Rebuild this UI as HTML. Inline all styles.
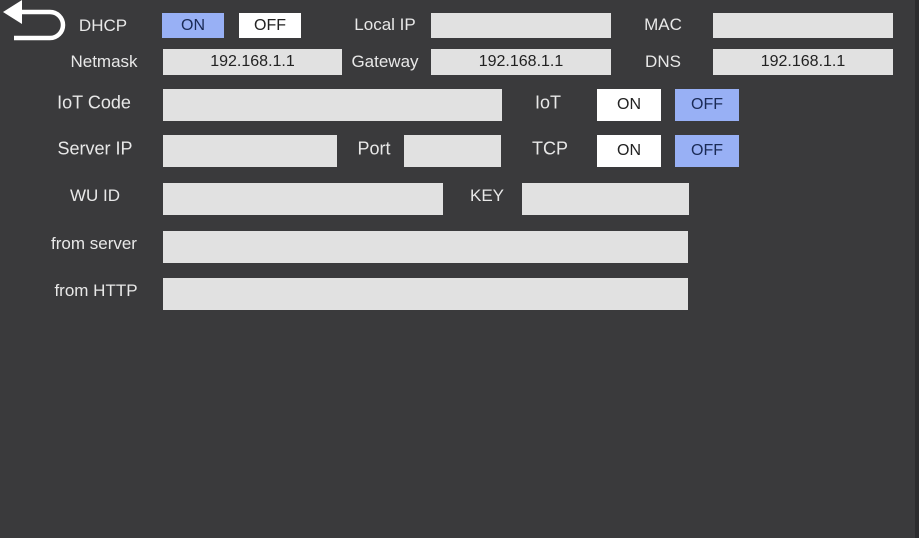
<!DOCTYPE html>
<html><head><style>
html,body{margin:0;padding:0;background:#3a3a3c;}
body{width:919px;height:538px;position:relative;overflow:hidden;font-family:"Liberation Sans",sans-serif;}
.b{position:absolute;background:#e1e1e1;color:#222;font-size:16px;text-align:center;box-sizing:border-box;}
.l{position:absolute;color:#e8e8e8;font-size:17px;transform:translate(-50%,-50%);white-space:nowrap;}
.on{background:#98b0f5;color:#1a2a55;}
.w{background:#fff;color:#222;}
</style></head><body>
<div style="position:absolute;right:0;top:0;width:4px;height:538px;background:#2c2c2e"></div>
<svg style="position:absolute;left:0;top:0" width="70" height="45" viewBox="0 0 70 45">
<path d="M20 12 H50 A13 13 0 0 1 50 38 H14" fill="none" stroke="#fff" stroke-width="4.5"/>
<path d="M3 12 L22 0 L22 24 Z" fill="#fff"/>
</svg>
<div class="l" style="left:103px;top:26px">DHCP</div>
<div class="b on" style="left:162px;top:13px;width:62px;height:25px;line-height:25px">ON</div>
<div class="b w" style="left:239px;top:13px;width:62px;height:25px;line-height:25px">OFF</div>
<div class="l" style="left:385px;top:25px">Local IP</div>
<div class="b" style="left:431px;top:13px;width:180px;height:25px"></div>
<div class="l" style="left:663px;top:25px">MAC</div>
<div class="b" style="left:713px;top:13px;width:180px;height:25px"></div>

<div class="l" style="left:104px;top:62px">Netmask</div>
<div class="b" style="left:163px;top:49px;width:179px;height:26px;line-height:26px">192.168.1.1</div>
<div class="l" style="left:385px;top:62px">Gateway</div>
<div class="b" style="left:431px;top:49px;width:180px;height:26px;line-height:26px">192.168.1.1</div>
<div class="l" style="left:663px;top:62px">DNS</div>
<div class="b" style="left:713px;top:49px;width:180px;height:26px;line-height:26px">192.168.1.1</div>

<div class="l" style="left:94px;top:103px;font-size:18px">IoT Code</div>
<div class="b" style="left:163px;top:89px;width:339px;height:32px"></div>
<div class="l" style="left:548px;top:103px;font-size:18px">IoT</div>
<div class="b w" style="left:597px;top:89px;width:64px;height:32px;line-height:32px">ON</div>
<div class="b on" style="left:675px;top:89px;width:64px;height:32px;line-height:32px">OFF</div>

<div class="l" style="left:95px;top:149px;font-size:18px">Server IP</div>
<div class="b" style="left:163px;top:135px;width:174px;height:32px"></div>
<div class="l" style="left:374px;top:149px;font-size:18px">Port</div>
<div class="b" style="left:404px;top:135px;width:97px;height:32px"></div>
<div class="l" style="left:550px;top:149px;font-size:18px">TCP</div>
<div class="b w" style="left:597px;top:135px;width:64px;height:32px;line-height:32px">ON</div>
<div class="b on" style="left:675px;top:135px;width:64px;height:32px;line-height:32px">OFF</div>

<div class="l" style="left:95px;top:196px">WU ID</div>
<div class="b" style="left:163px;top:183px;width:280px;height:32px"></div>
<div class="l" style="left:487px;top:196px">KEY</div>
<div class="b" style="left:522px;top:183px;width:167px;height:32px"></div>

<div class="l" style="left:94px;top:244px">from server</div>
<div class="b" style="left:163px;top:231px;width:525px;height:32px"></div>
<div class="l" style="left:96px;top:291px">from HTTP</div>
<div class="b" style="left:163px;top:278px;width:525px;height:32px"></div>
</body></html>
